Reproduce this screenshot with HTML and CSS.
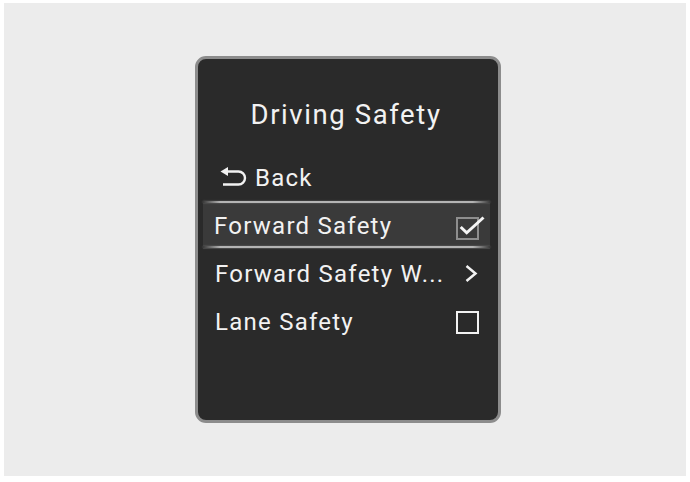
FILE: index.html
```html
<!DOCTYPE html>
<html lang="en">
<head>
<meta charset="utf-8">
<title>Driving Safety</title>
<link rel="stylesheet" href="styles.css">
</head>
<body>
<div class="stage">
  <div class="panel">
    <h1 class="title">Driving Safety</h1>
    <ul class="menu">
      <li class="row row-back">
        <svg class="back-icon" width="28" height="20" viewBox="0 0 28 20">
          <path d="M7 4.5 H18.5 A6.5 6.5 0 0 1 18.5 17.5 H3" fill="none" stroke="#f2f2f2" stroke-width="2.4"/>
          <path d="M0.5 4.5 L8 0 L8 9 Z" fill="#f2f2f2"/>
        </svg>
        <span class="label">Back</span>
      </li>
      <li class="row row-selected">
        <span class="label">Forward Safety</span>
        <svg class="ctrl" width="32" height="32" viewBox="0 0 32 32">
          <rect x="3" y="8" width="21" height="21" fill="none" stroke="#8e8e8e" stroke-width="2"/>
          <path d="M6.7 17 L12.7 22.8 L29.5 7.5" fill="none" stroke="#f5f5f5" stroke-width="3"/>
        </svg>
      </li>
      <li class="row">
        <span class="label">Forward Safety W...</span>
        <svg class="ctrl" width="32" height="32" viewBox="0 0 32 32">
          <path d="M12.5 8 L21.5 15.5 L12.5 23" fill="none" stroke="#f2f2f2" stroke-width="2.5"/>
        </svg>
      </li>
      <li class="row">
        <span class="label">Lane Safety</span>
        <svg class="ctrl" width="32" height="32" viewBox="0 0 32 32">
          <rect x="3" y="6" width="21" height="21" fill="none" stroke="#f2f2f2" stroke-width="2"/>
        </svg>
      </li>
    </ul>
  </div>
</div>
</body>
</html>
```

FILE: styles.css
```css
html, body {
  margin: 0;
  padding: 0;
  background: #ffffff;
}

body {
  padding: 3px 4px 6px 4px;
  font-family: Roboto, "Noto Sans", sans-serif;
  color: #f2f2f2;
}

.stage {
  background: #ececec;
  height: 473px;
  padding: 53px 0 0 191px;
  box-sizing: border-box;
}

.panel {
  width: 306px;
  height: 367px;
  box-sizing: border-box;
  background: #2a2a2a;
  border: 3px solid #8c8c8c;
  border-radius: 11px;
  padding-top: 36px;
}

.title {
  margin: 0;
  font-size: 27.5px;
  font-weight: 400;
  line-height: 40px;
  letter-spacing: 1.6px;
  text-align: center;
  padding-right: 4px;
}

.menu {
  list-style: none;
  margin: 18px 0 0 0;
  padding: 0;
}

.row {
  height: 48px;
  margin: 0 8px 0 5px;
  padding: 2px 4px 0 12px;
  box-sizing: border-box;
  display: flex;
  align-items: center;
  justify-content: space-between;
  font-size: 24px;
  letter-spacing: 1.25px;
  position: relative;
}

.label {
  white-space: nowrap;
}

.row-back {
  justify-content: flex-start;
  padding-left: 17px;
}

.back-icon {
  margin-right: 7px;
  margin-top: -3px;
}

.row-selected {
  background: #3a3a3a;
  padding-left: 11px;
}

.row-selected::before,
.row-selected::after {
  content: "";
  position: absolute;
  left: 0;
  right: 0;
  height: 2px;
  background: linear-gradient(to right, rgba(180,180,180,0), #b4b4b4 6%, #b4b4b4 94%, rgba(180,180,180,0));
  box-shadow: 0 0 2px rgba(170,170,170,0.5);
}

.row-selected::before {
  top: 0;
}

.row-selected::after {
  bottom: 1px;
}

.ctrl {
  flex: none;
}
```
